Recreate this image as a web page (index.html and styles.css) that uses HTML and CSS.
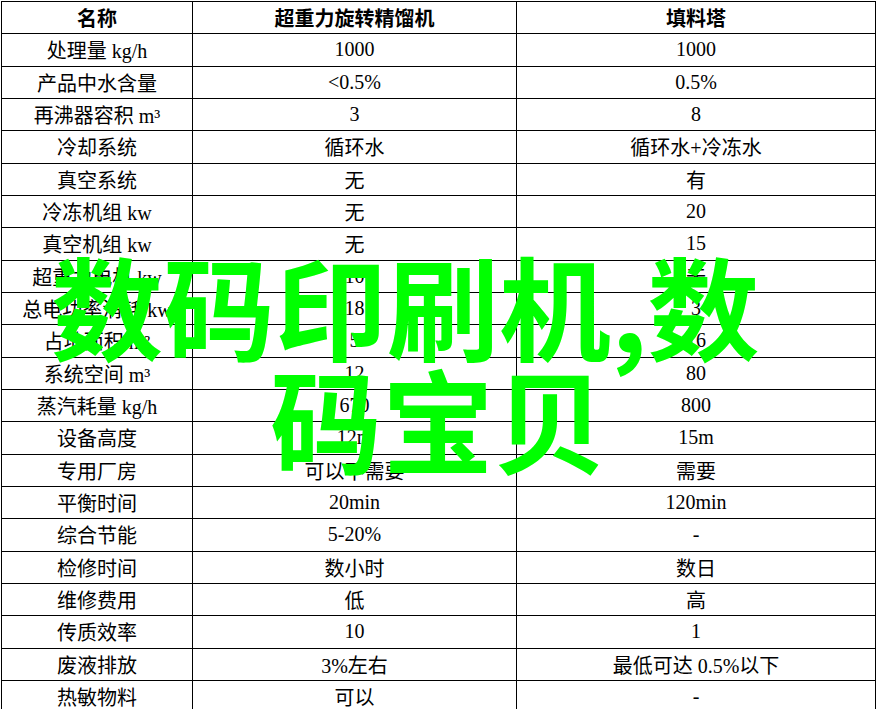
FILE: index.html
```html
<!DOCTYPE html>
<html lang="zh-CN">
<head>
<meta charset="utf-8">
<title>超重力旋转精馏机 与 填料塔 对比</title>
<link rel="stylesheet" href="styles.css">
</head>
<body>
<div class="page">
  <div class="grid">
    <div class="cell head">名称</div><div class="cell head">超重力旋转精馏机</div><div class="cell head">填料塔</div>
    <div class="cell">处理量 kg/h</div><div class="cell">1000</div><div class="cell">1000</div>
    <div class="cell">产品中水含量</div><div class="cell">&lt;0.5%</div><div class="cell">0.5%</div>
    <div class="cell">再沸器容积 m³</div><div class="cell">3</div><div class="cell">8</div>
    <div class="cell">冷却系统</div><div class="cell">循环水</div><div class="cell">循环水+冷冻水</div>
    <div class="cell">真空系统</div><div class="cell">无</div><div class="cell">有</div>
    <div class="cell">冷冻机组 kw</div><div class="cell">无</div><div class="cell">20</div>
    <div class="cell">真空机组 kw</div><div class="cell">无</div><div class="cell">15</div>
    <div class="cell">超重力电机 kw</div><div class="cell">10</div><div class="cell">无</div>
    <div class="cell">总电功率消耗 kw</div><div class="cell">18</div><div class="cell">3</div>
    <div class="cell">占地面积 m²</div><div class="cell">5</div><div class="cell">16</div>
    <div class="cell">系统空间 m³</div><div class="cell">12</div><div class="cell">80</div>
    <div class="cell">蒸汽耗量 kg/h</div><div class="cell">670</div><div class="cell">800</div>
    <div class="cell">设备高度</div><div class="cell">12m</div><div class="cell">15m</div>
    <div class="cell">专用厂房</div><div class="cell">可以不需要</div><div class="cell">需要</div>
    <div class="cell">平衡时间</div><div class="cell">20min</div><div class="cell">120min</div>
    <div class="cell">综合节能</div><div class="cell">5-20%</div><div class="cell">-</div>
    <div class="cell">检修时间</div><div class="cell">数小时</div><div class="cell">数日</div>
    <div class="cell">维修费用</div><div class="cell">低</div><div class="cell">高</div>
    <div class="cell">传质效率</div><div class="cell">10</div><div class="cell">1</div>
    <div class="cell">废液排放</div><div class="cell">3%左右</div><div class="cell">最低可达 0.5%以下</div>
    <div class="cell">热敏物料</div><div class="cell">可以</div><div class="cell">-</div>
  </div>
  <div class="overlay">
    <div class="line line-one">数码印刷机,数</div>
    <div class="line line-two">码宝贝</div>
  </div>
</div>
</body>
</html>
```

FILE: styles.css
```css
html, body {
  margin: 0;
  padding: 0;
  background: #ffffff;
}

.page {
  position: relative;
  width: 877px;
  height: 709px;
  overflow: hidden;
}

.grid {
  display: grid;
  grid-template-columns: 190px 323px 358px;
  grid-auto-rows: 31.33px;
  gap: 1px;
  padding: 1px;
  margin: 1px 0 0 1px;
  width: max-content;
  background: #000000;
}

.cell {
  background: #ffffff;
  display: flex;
  align-items: center;
  justify-content: center;
  font-family: "Liberation Serif", "Noto Sans CJK SC", serif;
  font-size: 20px;
  color: #000000;
  white-space: nowrap;
}

.head {
  font-weight: bold;
}

.overlay {
  position: absolute;
  left: 0;
  top: 248px;
  font-family: "Noto Sans CJK SC", sans-serif;
  font-weight: bold;
  font-size: 112px;
  line-height: 113px;
  color: #00ff00;
  white-space: nowrap;
}

.line-one {
  padding-left: 51px;
}

.line-two {
  padding-left: 270px;
}
```
